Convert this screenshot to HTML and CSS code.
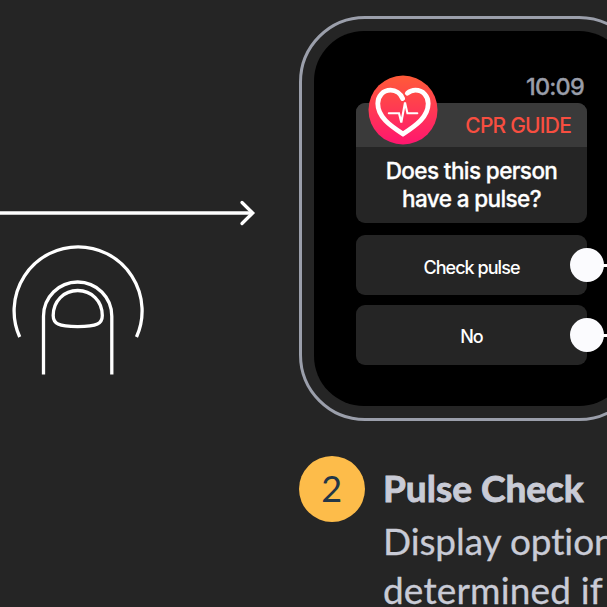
FILE: index.html
```
<!DOCTYPE html>
<html lang="en">
<head>
<meta charset="utf-8">
<title>CPR Guide</title>
<link rel="stylesheet" href="styles.css">
</head>
<body>
<main class="flow">
  <section class="gesture">
    <svg class="gesture-art" viewBox="0 0 298 200" aria-hidden="true">
      <path class="arrow" d="M-2 23H252"/>
      <path class="arrow-head" d="M242 12.500L252.700 23L242 33.500"/>
      <path d="M19.700 147A64 64 0 1 1 136.500 147"/>
      <path d="M43.500 184.500V126.200A34.150 34.200 0 0 1 111.800 126.200V184.500"/>
      <path d="M53.200 125.500C53.200 111 64 100.500 77.700 100.500C91.500 100.500 102.300 111 102.300 125.500C102.300 133.500 97.500 136.600 77.700 136.600C58 136.600 53.200 133.500 53.200 125.500Z"/>
    </svg>
  </section>
  <section class="step">
    <div class="watch">
      <div class="screen">
        <time class="clock">10:09</time>
        <div class="card">
          <header class="card-head">
            <svg class="heart" viewBox="0 0 70 70" aria-hidden="true">
              <defs><linearGradient id="heat" x1="0" y1="0" x2="0" y2="1"><stop offset="0" stop-color="#ff5b38"/><stop offset="1" stop-color="#ff166f"/></linearGradient></defs>
              <circle cx="35" cy="35" r="34.500" fill="url(#heat)" stroke="none"/>
              <path class="heart-line" d="M34.600 23.500C32.500 18.500 27.800 15.200 22.600 15.200C15 15.200 9.800 21 9.800 28.500C9.800 42 22 50.500 35 59C48 50.500 60.200 42 60.200 28.500C60.200 21 55 15.200 47.400 15.200C44.200 15.200 41.500 16.400 39.300 18.300"/>
              <path class="pulse-line" d="M20.800 38.300H31L33.300 47.500L37 27.500L39.400 38.300H49.300"/>
            </svg>
            <span class="app-name">CPR GUIDE</span>
          </header>
          <p class="question">Does this person<br>have a pulse?</p>
        </div>
        <div class="option"><span class="check">Check pulse</span><i class="pin"></i></div>
        <div class="option"><span>No</span><i class="pin"></i></div>
      </div>
    </div>
    <div class="caption">
      <span class="number">2</span>
      <div class="copy">
        <h2>Pulse Check</h2>
        <p class="line-one">Display options</p>
        <p class="line-two">determined if</p>
      </div>
    </div>
  </section>
</main>
</body>
</html>
```
FILE: styles.css
```
* { box-sizing: border-box; }
body { margin: 0; background: #252525; width: 607px; height: 607px; overflow: hidden; }
h2, p { margin: 0; }
.flow { display: grid; grid-template-columns: 298.500px 1fr; height: 607px; overflow: hidden; }
.gesture { padding-top: 190px; }
.gesture-art { display: block; width: 298px; height: 200px; fill: none; stroke: #fff; stroke-width: 3.3; }
.arrow-head { stroke-linecap: round; }
.step { padding-top: 15.500px; min-width: 0; }
.watch { width: 346.500px; height: 405.500px; padding: 12.500px; border: 3.300px solid #9b9fab; border-radius: 66px; }
.screen { height: 375px; width: 315px; padding: 43px 42px 0; border-radius: 50px; background: #000; font-family: Inter, "Liberation Sans", sans-serif; color: #fff; }
.clock { display: block; height: 29px; padding-right: 3px; text-align: right; font-size: 23.500px; line-height: 25px; font-weight: 500; letter-spacing: -0.800px; color: #999da9; -webkit-text-stroke: 0.300px #999da9; }
.card { height: 120px; border-radius: 9px; background: #252525; }
.card-head { display: flex; position: relative; justify-content: flex-end; align-items: center; height: 44px; padding-right: 16px; border-radius: 9px 9px 0 0; background: #3a3a3a; }
.heart { position: absolute; left: 11.500px; top: -28.500px; width: 70px; height: 70px; fill: none; stroke: #fff; stroke-linejoin: miter; stroke-linecap: round; }
.heart-line { stroke-width: 4.800; }
.pulse-line { stroke-width: 2.100; }
.app-name { padding-top: 2px; color: #f84e40; font-size: 21px; line-height: 26px; font-weight: 500; letter-spacing: -0.800px; }
.question { padding-top: 10px; text-align: center; font-size: 22.500px; line-height: 27.800px; font-weight: 500; letter-spacing: -0.600px; -webkit-text-stroke: 0.300px #fff; }
.option { position: relative; display: flex; align-items: center; justify-content: center; height: 60px; margin-top: 12px; padding-top: 4px; border-radius: 9px; background: #252525; font-size: 18px; font-weight: 500; letter-spacing: -0.950px; }
.option + .option { margin-top: 9.700px; }
.pin { position: absolute; right: -17px; top: 13px; width: 34px; height: 34px; border-radius: 50%; background: #fbfbfe; }
.pin::after { content: ""; position: absolute; left: 30px; top: 16px; width: 24px; height: 3px; background: #fff; }
.caption { display: flex; gap: 18px; padding-top: 34.500px; font-family: Lato, "Liberation Sans", sans-serif; color: #c9cbd6; font-variant-ligatures: none; }
.number { flex: none; width: 66.500px; height: 66.500px; border-radius: 50%; background: #fdbc4a; color: #233647; text-align: center; font-size: 36px; line-height: 65px; }
.copy { padding-top: 7.400px; white-space: nowrap; font-size: 37px; line-height: 49.500px; -webkit-text-stroke: 0.300px #c9cbd6; }
h2 { font-size: 37px; line-height: 49.500px; font-weight: 700; -webkit-text-stroke: 0.900px #c9cbd6; }
.line-one { padding-top: 3.500px; letter-spacing: -0.100px; }
.line-two { letter-spacing: 0.150px; }
```
